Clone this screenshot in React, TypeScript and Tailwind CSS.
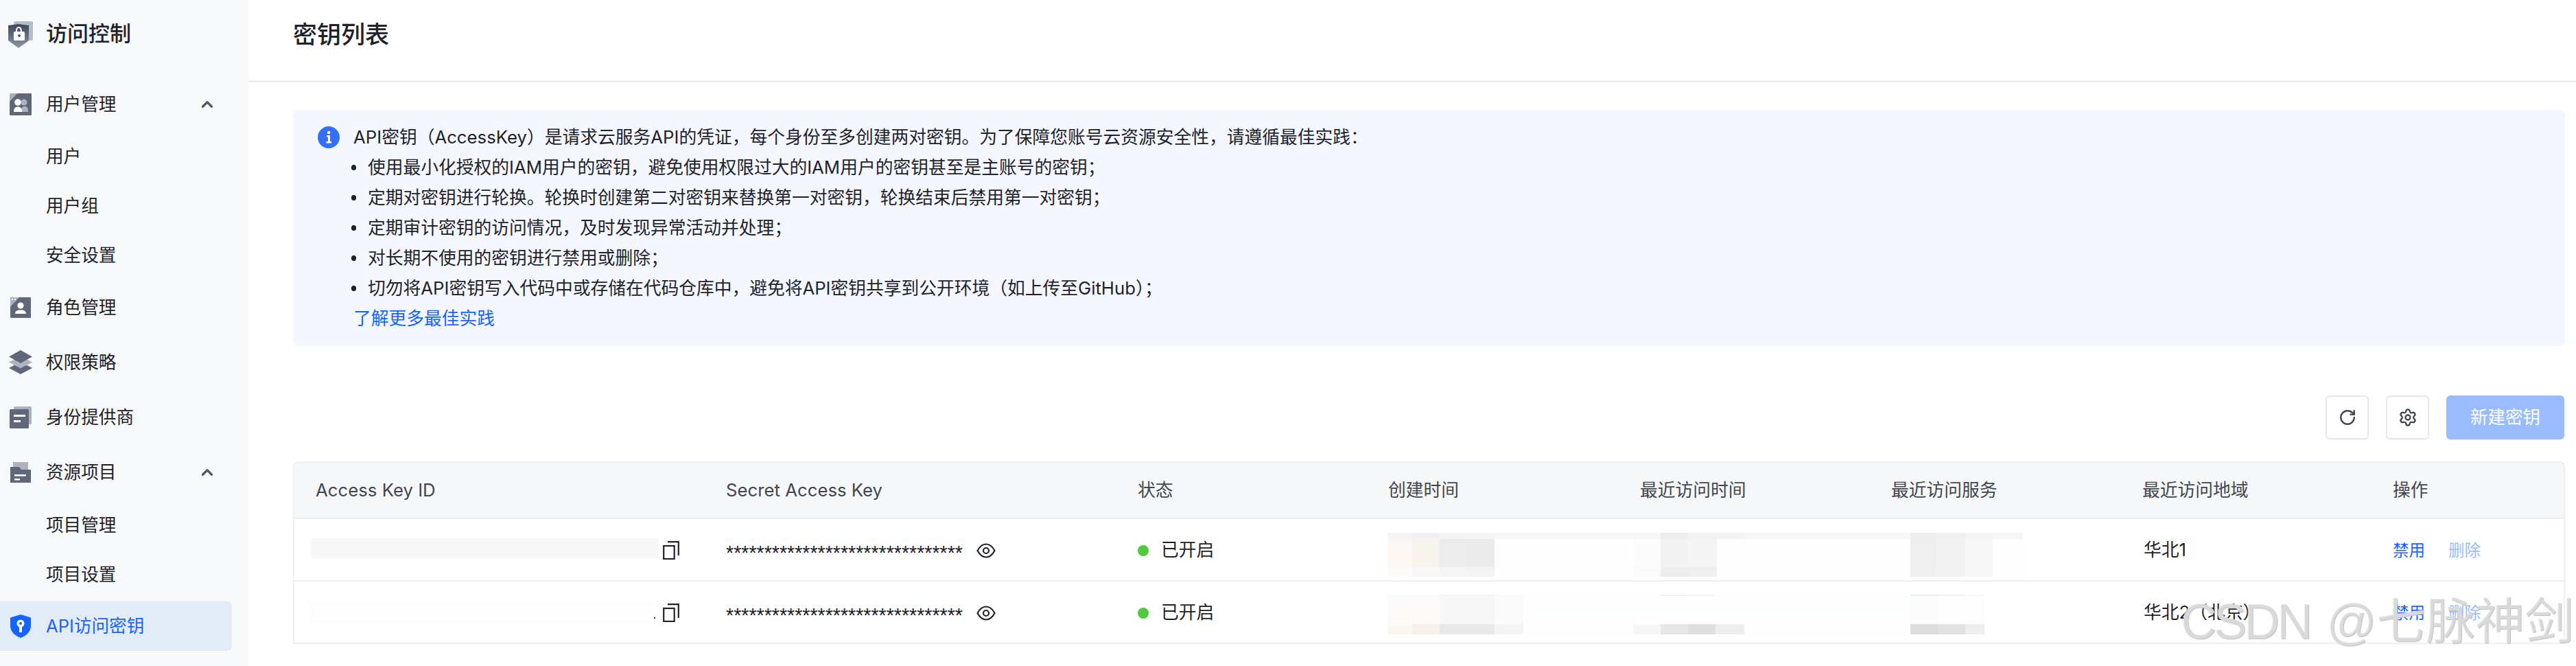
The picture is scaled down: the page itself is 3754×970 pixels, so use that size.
import { ChevronUp, RotateCw, Settings } from "lucide-react";

type MosaicCell = { w: string; top: string; mid: string; bot: string };

const rowOneMosaic: MosaicCell[] = [
  { w: "w-[36px]", top: "bg-[#f3f4f6]", mid: "bg-[#fcf7f3]", bot: "bg-[#fcfbf9]" },
  { w: "w-[40px]", top: "bg-[#eff0f3]", mid: "bg-[#f8f2ed]", bot: "bg-[#f9f7f5]" },
  { w: "w-[40px]", top: "bg-[#f3f4f6]", mid: "bg-[#ececec]", bot: "bg-[#f5f5f5]" },
  { w: "w-[40px]", top: "bg-[#f4f5f7]", mid: "bg-[#ebebeb]", bot: "bg-[#f4f4f4]" },
  { w: "w-[202px]", top: "bg-[#f6f7f9]", mid: "bg-[#fefefe]", bot: "bg-[#fefefe]" },
  { w: "w-[40px]", top: "bg-[#f5f6f7]", mid: "bg-[#fcfcfc]", bot: "bg-[#fafafa]" },
  { w: "w-[40px]", top: "bg-[#ecedef]", mid: "bg-[#f2f2f2]", bot: "bg-[#eeeeee]" },
  { w: "w-[42px]", top: "bg-[#f0f1f3]", mid: "bg-[#f4f4f4]", bot: "bg-[#efefef]" },
  { w: "w-[40px]", top: "bg-[#f1f2f4]", mid: "bg-[#fefefe]", bot: "bg-[#fefefe]" },
  { w: "w-[242px]", top: "bg-[#f6f7f9]", mid: "bg-[#fefefe]", bot: "bg-[#fefefe]" },
  { w: "w-[38px]", top: "bg-[#eceef0]", mid: "bg-[#efefef]", bot: "bg-[#f0f0f0]" },
  { w: "w-[42px]", top: "bg-[#eff0f2]", mid: "bg-[#f2f2f2]", bot: "bg-[#f2f2f2]" },
  { w: "w-[40px]", top: "bg-[#f2f3f5]", mid: "bg-[#f7f7f7]", bot: "bg-[#f6f6f6]" },
  { w: "w-[44px]", top: "bg-[#f5f6f8]", mid: "bg-[#fefefe]", bot: "bg-[#fefefe]" },
];

const rowTwoMosaic: MosaicCell[] = [
  { w: "w-[36px]", top: "bg-[#fdfbf9]", mid: "bg-[#fdfbf9]", bot: "bg-[#fcf6f0]" },
  { w: "w-[40px]", top: "bg-[#fcfaf8]", mid: "bg-[#fcfaf8]", bot: "bg-[#f7efe9]" },
  { w: "w-[80px]", top: "bg-[#f4f4f4]", mid: "bg-[#f7f7f7]", bot: "bg-[#e8e8e8]" },
  { w: "w-[42px]", top: "bg-[#fafafa]", mid: "bg-[#fafafa]", bot: "bg-[#f4f4f4]" },
  { w: "w-[160px]", top: "bg-[#fdfefe]", mid: "bg-[#fdfefe]", bot: "bg-[#fefefe]" },
  { w: "w-[40px]", top: "bg-[#fdfefe]", mid: "bg-[#fdfefe]", bot: "bg-[#f7f7f7]" },
  { w: "w-[40px]", top: "bg-[#f0f0f0]", mid: "bg-[#fdfefe]", bot: "bg-[#e7e7e7]" },
  { w: "w-[40px]", top: "bg-[#f4f4f4]", mid: "bg-[#fdfefe]", bot: "bg-[#dfdfdf]" },
  { w: "w-[42px]", top: "bg-[#fdfefe]", mid: "bg-[#fdfefe]", bot: "bg-[#eeeeee]" },
  { w: "w-[242px]", top: "bg-[#fdfefe]", mid: "bg-[#fdfefe]", bot: "bg-[#fefefe]" },
  { w: "w-[40px]", top: "bg-[#eeeeee]", mid: "bg-[#fcfcfc]", bot: "bg-[#dcdcdc]" },
  { w: "w-[40px]", top: "bg-[#f2f2f2]", mid: "bg-[#fdfdfd]", bot: "bg-[#e2e2e2]" },
  { w: "w-[28px]", top: "bg-[#f6f6f6]", mid: "bg-[#fdfdfd]", bot: "bg-[#eeeeee]" },
];

function LogoIcon() {
  return (
    <svg viewBox="0 0 36 40" className="h-[40px] w-[36px]">
      <defs>
        <linearGradient id="logoShield" x1="0" y1="0" x2="0" y2="1">
          <stop offset="0" stopColor="#3d4759" />
          <stop offset="1" stopColor="#8f97a6" />
        </linearGradient>
      </defs>
      <rect x="8" y="0" width="28" height="28" rx="2" fill="#b6bdca" />
      <path d="M0 6 L15 4 L30 6 V28 L15 39 L0 28 Z" fill="url(#logoShield)" />
      <path d="M12 15 V12.5 A3.4 3.4 0 0 1 18.8 12.5 V15" fill="none" stroke="#fff" strokeWidth="2" />
      <rect x="8" y="15" width="16" height="13" rx="1.5" fill="#fff" />
      <circle cx="16" cy="21" r="2" fill="#4a5467" />
    </svg>
  );
}

function UsersIcon() {
  return (
    <svg viewBox="0 0 32 32" className="h-[32px] w-[32px]">
      <rect width="32" height="32" rx="1" fill="#5f6778" />
      <path d="M0 0 H11 L0 12 Z" fill="#aab0ba" />
      <circle cx="21" cy="13" r="4.5" fill="#aeb3bc" />
      <path d="M16 27 C16 21 19 19 22 19 C26 19 27 22 27 27 Z" fill="#aeb3bc" />
      <circle cx="12" cy="13" r="4.8" fill="#fff" />
      <path d="M6 27 C6 21 9 19.5 12 19.5 C16 19.5 18 22 18 27 Z" fill="#fff" />
    </svg>
  );
}

function RoleIcon() {
  return (
    <svg viewBox="0 0 30 30" className="h-[30px] w-[30px]">
      <rect width="30" height="30" rx="1" fill="#5f6778" />
      <path d="M0 0 H13 L0 14 Z" fill="#aab0ba" />
      <rect x="2" y="2" width="2" height="2" fill="#fff" />
      <rect x="6" y="2" width="2" height="2" fill="#fff" />
      <circle cx="15" cy="12" r="4.6" fill="#fff" />
      <path d="M7 24 C7 20 10 18.5 15 18.5 C20 18.5 23 20 23 24 Z" fill="#fff" />
    </svg>
  );
}

function LayersIcon() {
  return (
    <svg viewBox="0 0 34 36" className="h-[36px] w-[34px]">
      <path d="M0 26 L17 17 L34 26 L17 35 Z" fill="#5f6778" />
      <path d="M0 17.5 L17 8.5 L34 17.5 L17 26.5 Z" fill="#aeb3bc" />
      <path d="M0 9.5 L17 0 L34 9.5 L17 19 Z" fill="#5f6778" />
    </svg>
  );
}

function ProviderIcon() {
  return (
    <svg viewBox="0 0 32 32" className="h-[32px] w-[32px]">
      <rect x="6" y="0" width="26" height="26" rx="1.5" fill="#aeb3bc" />
      <rect x="0" y="4" width="28" height="28" rx="1.5" fill="#5f6778" />
      <rect x="6" y="12" width="17" height="3" fill="#fff" />
      <rect x="6" y="20" width="10" height="3" fill="#fff" />
    </svg>
  );
}

function FolderIcon() {
  return (
    <svg viewBox="0 0 30 30" className="h-[30px] w-[30px]">
      <rect x="4" y="0" width="22" height="20" fill="#aeb3bc" />
      <path d="M0 7 H13 L16 11 H30 V30 H0 Z" fill="#5f6778" />
      <rect x="6" y="18" width="17" height="2.5" fill="#fff" />
      <rect x="6" y="24" width="8" height="2.5" fill="#fff" />
    </svg>
  );
}

function KeyShieldIcon() {
  return (
    <svg viewBox="0 0 30 34" className="h-[34px] w-[30px]">
      <path d="M15 0 L30 4.5 V17 C30 25 23 31 15 34 C7 31 0 25 0 17 V4.5 Z" fill="#1664ff" />
      <circle cx="15" cy="13" r="5.5" fill="#fff" />
      <rect x="13" y="16" width="4" height="10" fill="#fff" />
      <circle cx="15" cy="13" r="2" fill="#1664ff" />
    </svg>
  );
}

function InfoIcon() {
  return (
    <svg viewBox="0 0 32 32" className="h-[32px] w-[32px] shrink-0">
      <circle cx="16" cy="16" r="16" fill="#3370ff" />
      <circle cx="16" cy="9" r="2.2" fill="#fff" />
      <path d="M13 13 H18 V22 H20 V24.5 H12.5 V22 H15 V15.5 H13 Z" fill="#fff" />
    </svg>
  );
}

function CopyIcon() {
  return (
    <svg viewBox="0 0 24 27" className="h-[27px] w-[24px] shrink-0" fill="none" stroke="#1f2329" strokeWidth="2.2">
      <rect x="1.2" y="7" width="15.5" height="19" />
      <path d="M7 1.2 H22.8 V21" />
    </svg>
  );
}

function EyeIcon() {
  return (
    <svg viewBox="0 0 28 22" className="h-[22px] w-[28px] shrink-0" fill="none" stroke="#1f2329" strokeWidth="2.2">
      <path d="M1.5 11 C5 4.5 9 1.5 14 1.5 C19 1.5 23 4.5 26.5 11 C23 17.5 19 20.5 14 20.5 C9 20.5 5 17.5 1.5 11 Z" />
      <circle cx="14" cy="11" r="4" />
    </svg>
  );
}

function TopItem({ label, icon, open }: { label: string; icon: React.ReactNode; open?: boolean }) {
  return (
    <div className="flex h-[72px] items-center text-[25.6px] text-[#1f2329]">
      <div className="flex w-[60px] shrink-0 justify-center">{icon}</div>
      <span className="ml-[7px]">{label}</span>
      {open ? <ChevronUp className="absolute left-[289px] h-[26px] w-[26px] text-[#4e5969]" strokeWidth={3} /> : null}
    </div>
  );
}

function SubItem({ label }: { label: string }) {
  return <div className="flex h-[72px] items-center pl-[67px] text-[25.6px] text-[#1f2329]">{label}</div>;
}

function Sidebar() {
  return (
    <aside className="relative h-full w-[362px] shrink-0 bg-[#f7f8fa]">
      <div className="flex h-[116px] items-start pt-[31px]">
        <div className="ml-[12px] w-[36px]">
          <LogoIcon />
        </div>
        <span className="ml-[19px] text-[31px] font-medium leading-[36px] text-[#1d2129]">访问控制</span>
      </div>
      <TopItem label="用户管理" icon={<UsersIcon />} open />
      <div className="mt-[4px] mb-[4px]">
        <SubItem label="用户" />
        <SubItem label="用户组" />
        <SubItem label="安全设置" />
      </div>
      <div className="flex flex-col gap-[8px]">
        <TopItem label="角色管理" icon={<RoleIcon />} />
        <TopItem label="权限策略" icon={<LayersIcon />} />
        <TopItem label="身份提供商" icon={<ProviderIcon />} />
        <TopItem label="资源项目" icon={<FolderIcon />} open />
      </div>
      <div className="mt-[5px] mb-[3px]">
        <SubItem label="项目管理" />
        <SubItem label="项目设置" />
      </div>
      <div className="flex h-[72px] w-[338px] items-center rounded-r-[8px] bg-[#e3eaf8] text-[25.6px] text-[#1664ff]">
        <div className="flex w-[60px] shrink-0 justify-center">
          <KeyShieldIcon />
        </div>
        <span className="ml-[7px]">API访问密钥</span>
      </div>
    </aside>
  );
}

function Notice() {
  const tips = [
    "使用最小化授权的IAM用户的密钥，避免使用权限过大的IAM用户的密钥甚至是主账号的密钥；",
    "定期对密钥进行轮换。轮换时创建第二对密钥来替换第一对密钥，轮换结束后禁用第一对密钥；",
    "定期审计密钥的访问情况，及时发现异常活动并处理；",
    "对长期不使用的密钥进行禁用或删除；",
    "切勿将API密钥写入代码中或存储在代码仓库中，避免将API密钥共享到公开环境（如上传至GitHub）；",
  ];
  return (
    <div className="mt-[40px] flex gap-[20px] rounded-[8px] bg-[#f4f7ff] py-[18px] pl-[36px] text-[25.75px] leading-[44px] text-[#1f2329]">
      <div className="flex h-[44px] items-center">
        <InfoIcon />
      </div>
      <div>
        <p>API密钥（AccessKey）是请求云服务API的凭证，每个身份至多创建两对密钥。为了保障您账号云资源安全性，请遵循最佳实践：</p>
        <ul>
          {tips.map((tip) => (
            <li key={tip} className="flex items-center">
              <span className="mr-[17px] ml-[-3px] h-[8px] w-[7px] rounded-full bg-[#1f2329]" />
              {tip}
            </li>
          ))}
        </ul>
        <a className="text-[#1664ff]">了解更多最佳实践</a>
      </div>
    </div>
  );
}

function Toolbar() {
  return (
    <div className="mt-[72px] flex justify-end gap-[25px] pr-px">
      <button className="flex h-[64px] w-[63px] items-center justify-center rounded-[6px] border-2 border-[#e5e8ee] bg-white shadow-[0_1px_2px_rgba(0,0,0,0.06)]">
        <RotateCw className="h-[26px] w-[26px] text-[#414752]" strokeWidth={2.2} />
      </button>
      <button className="flex h-[64px] w-[63px] items-center justify-center rounded-[6px] border-2 border-[#e5e8ee] bg-white shadow-[0_1px_2px_rgba(0,0,0,0.06)]">
        <Settings className="h-[28px] w-[28px] text-[#414752]" strokeWidth={2} />
      </button>
      <button className="flex h-[64px] w-[172px] items-center justify-center rounded-[6px] bg-[#98bcff] text-[25.6px] text-white shadow-[0_1px_2px_rgba(0,0,0,0.08)]">
        新建密钥
      </button>
    </div>
  );
}

const gridCols = "grid grid-cols-[598px_600px_365px_367px_366px_366px_365px_1fr] items-center";

function Mosaic({
  cells,
  className,
  heights,
}: {
  cells: MosaicCell[];
  className: string;
  heights: [string, string, string];
}) {
  return (
    <div className={`absolute flex ${className}`}>
      {cells.map((cell, i) => (
        <div key={i} className={`flex flex-col ${cell.w}`}>
          <div className={`${heights[0]} ${cell.top}`} />
          <div className={`${heights[1]} ${cell.mid}`} />
          <div className={`${heights[2]} ${cell.bot}`} />
        </div>
      ))}
    </div>
  );
}

function KeyRow({
  region,
  keyMask,
  mosaic,
}: {
  region: string;
  keyMask: React.ReactNode;
  mosaic: React.ReactNode;
}) {
  return (
    <div className={`${gridCols} relative h-[91px] border-b-2 border-[#eceff3] pt-[2px] text-[25.75px] text-[#1f2329]`}>
      <div className="flex items-center pl-[24px]">
        {keyMask}
        <CopyIcon />
      </div>
      <div className="flex items-center pl-[31px]">
        <span className="w-[365px] translate-y-[4px] font-['Liberation_Sans',sans-serif] text-[28.6px] leading-none">
          *******************************
        </span>
        <EyeIcon />
      </div>
      <div className="flex items-center pl-[31px]">
        <span className="mr-[18px] h-[16px] w-[16px] rounded-full bg-[#4fcb3a]" />
        已开启
      </div>
      <div />
      <div />
      <div />
      <div className="pl-[33px]">{region}</div>
      <div className="flex gap-[34px] pl-[31px] text-[23.5px]">
        <a className="text-[#1664ff]">禁用</a>
        <a className="text-[#97bcff]">删除</a>
      </div>
      {mosaic}
    </div>
  );
}

function KeyTable() {
  const headers = ["Access Key ID", "Secret Access Key", "状态", "创建时间", "最近访问时间", "最近访问服务", "最近访问地域", "操作"];
  return (
    <div className="mt-[32px] rounded-t-[8px] border-x-2 border-t-2 border-[#eceff3]">
      <div className={`${gridCols} h-[82px] rounded-t-[6px] border-b-2 border-[#eceff3] bg-[#f6f7f9] text-[25.75px] text-[#42464e]`}>
        {headers.map((h) => (
          <div key={h} className="pl-[31px]">
            {h}
          </div>
        ))}
      </div>
      <KeyRow
        region="华北1"
        keyMask={<div className="mr-[6px] -mt-[6px] h-[29px] w-[507px] bg-[#f7f7f7]" />}
        mosaic={
          <Mosaic
            cells={rowOneMosaic}
            className="top-[20px] left-[1593px]"
            heights={["h-[9px]", "h-[41px]", "h-[14px]"]}
          />
        }
      />
      <KeyRow
        region="华北2（北京）"
        keyMask={
          <div className="mr-[14px] -mt-[2px] flex h-[33px] w-[499px] items-end justify-end bg-[#fdfdfd] pb-[7px]">
            <span className="h-[2px] w-[2px] translate-x-[3px] bg-[#333]" />
          </div>
        }
        mosaic={
          <Mosaic
            cells={rowTwoMosaic}
            className="top-[19px] left-[1593px]"
            heights={["h-[2px]", "h-[41px]", "h-[15px]"]}
          />
        }
      />
    </div>
  );
}

export default function App() {
  return (
    <div className="relative flex h-[970px] w-full overflow-hidden bg-white font-['Inter','Noto_Sans_CJK_SC',sans-serif]">
      <Sidebar />
      <main className="min-w-0 flex-1">
        <header className="flex h-[120px] items-start border-b-[3px] border-[#eceff3] pt-[28px] pl-[65px]">
          <h1 className="text-[35px] leading-[44px] font-medium text-[#1f2329]">密钥列表</h1>
        </header>
        <div className="pr-[16px] pl-[65px]">
          <Notice />
          <Toolbar />
          <KeyTable />
        </div>
      </main>
      <div className="pointer-events-none absolute top-[855px] left-[3178px] flex items-baseline whitespace-nowrap font-['Liberation_Sans','Noto_Sans_CJK_SC',sans-serif] text-[72px] leading-[100px] text-[#e4e4e4b0] [text-shadow:1px_1px_1px_#c0c0c0]">
        <span className="tracking-[-4px]">CSDN</span>
        <span className="ml-[24px]">@七脉神剑</span>
      </div>
    </div>
  );
}
